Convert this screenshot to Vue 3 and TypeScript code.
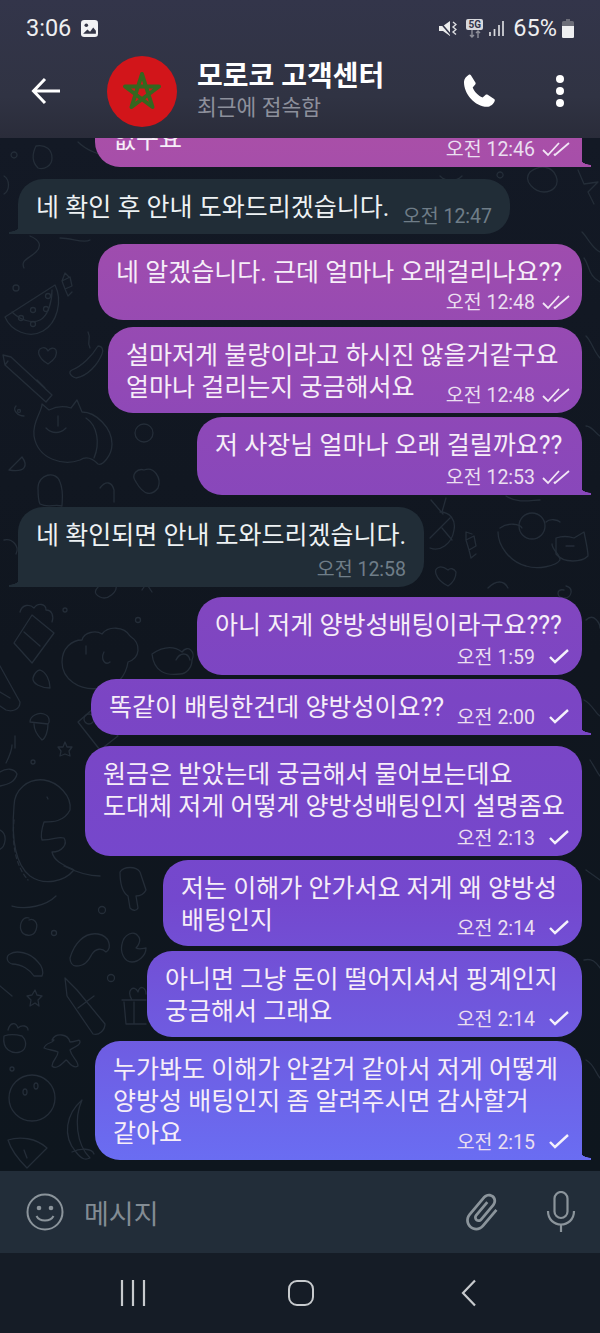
<script setup lang="ts">
interface Message {
  id: number
  out: boolean
  lines: string[]
  time: string
  read?: boolean
  tail?: boolean
  width: number
  height: number
  gap: number
}

const messages: Message[] = [
  { id: 1, out: true, lines: ['없구요'], time: '오전 12:46', read: true, tail: true, width: 487, height: 56, gap: 0 },
  { id: 2, out: false, lines: ['네 확인 후 안내 도와드리겠습니다.'], time: '오전 12:47', tail: true, width: 492, height: 55, gap: 12 },
  { id: 3, out: true, lines: ['네 알겠습니다. 근데 얼마나 오래걸리나요??'], time: '오전 12:48', read: true, width: 484, height: 76, gap: 10 },
  { id: 4, out: true, lines: ['설마저게 불량이라고 하시진 않을거같구요', '얼마나 걸리는지 궁금해서요'], time: '오전 12:48', read: true, width: 474, height: 86, gap: 7 },
  { id: 5, out: true, lines: ['저 사장님 얼마나 오래 걸릴까요??'], time: '오전 12:53', read: true, tail: true, width: 385, height: 78, gap: 4 },
  { id: 6, out: false, lines: ['네 확인되면 안내 도와드리겠습니다.'], time: '오전 12:58', tail: true, width: 406, height: 80, gap: 12 },
  { id: 7, out: true, lines: ['아니 저게 양방성배팅이라구요???'], time: '오전 1:59', width: 385, height: 78, gap: 10 },
  { id: 8, out: true, lines: ['똑같이 배팅한건데 양방성이요??'], time: '오전 2:00', tail: true, width: 491, height: 56, gap: 4 },
  { id: 9, out: true, lines: ['원금은 받았는데 궁금해서 물어보는데요', '도대체 저게 어떻게 양방성배팅인지 설명좀요'], time: '오전 2:13', width: 497, height: 110, gap: 11 },
  { id: 10, out: true, lines: ['저는 이해가 안가서요 저게 왜 양방성', '배팅인지'], time: '오전 2:14', width: 419, height: 86, gap: 4 },
  { id: 11, out: true, lines: ['아니면 그냥 돈이 떨어지셔서 핑계인지', '궁금해서 그래요'], time: '오전 2:14', width: 435, height: 86, gap: 5 },
  { id: 12, out: true, lines: ['누가봐도 이해가 안갈거 같아서 저게 어떻게', '양방성 배팅인지 좀 알려주시면 감사할거', '같아요'], time: '오전 2:15', tail: true, width: 487, height: 119, gap: 4 },
]
</script>

<template>
  <div class="phone">
    <header class="top">
      <div class="status">
        <span class="clock">3:06</span>
        <svg class="status-pic" width="17" height="17" viewBox="0 0 16 16">
          <rect width="16" height="16" rx="3" fill="#f2f2f4" />
          <circle cx="5" cy="5" r="1.7" fill="#343647" />
          <path d="M2 13l4-4 2.500 2 3-4 2.500 3v3z" fill="#343647" />
        </svg>
        <span class="status-space" />
        <svg width="18" height="17" viewBox="0 0 18 17">
          <path d="M0 6h4l7-5v15l-7-5H0z" fill="#eceded" />
          <path d="M0 1l12 14" stroke="#33354a" stroke-width="1.6" />
          <path d="M14 2l3 2.500-3 2.500 3 2.500-3 2.500 3 2.500" fill="none" stroke="#dcdde0" stroke-width="1.4" />
        </svg>
        <span class="net">
          <span class="net-5g">5G</span>
          <svg width="16" height="8" viewBox="0 0 16 8">
            <path d="M5 0v7M3 5l2 2 2-2M11 8V1M9 3l2-2 2 2" fill="none" stroke="#8e8f99" stroke-width="1.4" />
          </svg>
        </span>
        <svg width="15" height="17" viewBox="0 0 15 17">
          <path d="M1 12v4M5.500 9v7M10 5v11M14 1v15" stroke="#d9dade" stroke-width="1.700" />
        </svg>
        <span class="battery-text">65%</span>
        <svg class="battery" width="12" height="19" viewBox="0 0 12 19">
          <path d="M4 0h4v2h2.500a1.500 1.500 0 0 1 1.500 1.500v14a1.500 1.500 0 0 1-1.500 1.500h-9A1.500 1.500 0 0 1 0 17.500v-14A1.500 1.500 0 0 1 1.500 2H4z" fill="#6c6d78" />
          <path d="M0 7h12v10.500a1.500 1.500 0 0 1-1.500 1.500h-9A1.500 1.500 0 0 1 0 17.500z" fill="#efeff1" />
        </svg>
      </div>
      <div class="bar">
        <svg class="back" width="30" height="28" viewBox="0 0 30 28">
          <path d="M29 14H3M14 2L2.500 14 14 26" fill="none" stroke="#fff" stroke-width="3" />
        </svg>
        <div class="avatar">
          <svg width="40" height="40" viewBox="0 0 40 40">
            <path d="M20 3L30.500 36 3 15.500h34L9.500 36z" fill="none" stroke="#35671f" stroke-width="4" stroke-linejoin="round" />
          </svg>
        </div>
        <div class="title">
          <div class="name">모로코 고객센터</div>
          <div class="seen">최근에 접속함</div>
        </div>
        <svg class="call" width="36" height="38" viewBox="0 0 24 24">
          <path d="M6.600 1.500l3 4.800c.3.500.2 1-.1 1.400L7.800 9.600c1 2.700 3.500 5.300 6.600 6.700l1.900-1.700c.4-.4 1-.4 1.500-.1l4.300 2.900c.5.300.6.900.3 1.400-1 2.100-2.900 3.700-5 3.700C9.400 22.500 1.800 13.800 2 5.800c0-1.700 1.500-3.500 3.200-4.600.5-.3 1.100-.2 1.400.3z" fill="#fff" />
        </svg>
        <div class="dots"><i /><i /><i /></div>
      </div>
    </header>

    <main class="chat">
      <svg class="doodles" width="600" height="1033" viewBox="0 138 600 1033">
        <g fill="none" stroke="#242d38" stroke-width="1.300" stroke-linejoin="round" stroke-linecap="round">
          <!-- top strip -->
          <path d="M36 146c-4 8-4 16 2 22 6 2 14-2 14-10s-6-14-16-12zM78 142c8 8 22 14 34 14M14 152a3 3 0 1 0 .1 0" />
          <path d="M530 172c10-8 22-6 26 4s-4 16-12 16-22-10-14-20zM578 170l6 14 14-2-10 10 6 12M440 176c6 6 16 6 22 0M500 172a3 3 0 1 0 .1 0" />
          <path d="M4 176c6 4 6 14 0 18M582 232c6 6 10 16 18 20" />
          <!-- left column, upper -->
          <path d="M30 236c10 4 12 10 6 16s-16 8-12 16M60 238c12 0 24 6 30 2" />
          <!-- watermelon -->
          <path d="M5 317c6 14 24 22 38 14s20-30 12-46zM12 312c8 8 20 12 28 8s12-18 12-30" />
          <circle cx="21" cy="318" r="2.500" /><circle cx="33" cy="310" r="2.500" /><circle cx="33" cy="324" r="2.500" /><circle cx="46" cy="309" r="2.500" /><circle cx="48" cy="296" r="2.500" />
          <!-- candy -->
          <path d="M62 281l8-4 2 9-7 3zM62 281l3-8 4 4M65 289l3 7 4-4" />
          <circle cx="16" cy="288" r="3" />
          <!-- pencil -->
          <path d="M3 355l8 2 41 38-6 7-41-37zM37 380l8 8M8 361l-3 4" />
          <!-- heart -->
          <path d="M48 364c-10-6-12-14-6-16 3-1 5 1 6 3 2-3 6-4 8-1 2 5-2 10-8 14z" />
          <!-- pacifier -->
          <path d="M72 370c10-4 20-14 26-24 4 0 6 4 4 8-4 10-14 22-26 24-6-2-8-6-4-8zM90 348c-4-8 2-8-2-16" />
          <!-- cat -->
          <path d="M34 436c-2-14 8-24 8-32l7 6c8-4 16-4 22-2l6-8 5 12c14 0 30 16 30 32 0 12-10 22-14 20-6-6-12-8-18-4-16 6-42 0-46-24z" />
          <path d="M46 428c6 6 14 6 20 0M58 416v10M86 418c12 8 14 26 8 40" />
          <path d="M24 416c-6 0-12-6-8-10" />
          <circle cx="144" cy="433" r="9" /><circle cx="19" cy="411" r="1.500" />
          <path d="M9 470l13-13c6 8 4 16-13 13z" />
          <!-- ghost -->
          <path d="M38 488c0-14 18-18 22-6 4 10 2 18 2 24-8-2-14 2-22-2-2-4-2-10-2-16z" />
          <path d="M136 482c-6-8 2-14 8-12 10-4 18 8 14 18-6 8-14 8-22-6zM100 488c6-8 12-6 14 2v12" />
          <!-- left column, middle -->
          <path d="M24 526a5 5 0 1 0 .1 0M4 540c8-2 16 6 12 14M36 566c8-6 18-4 22 6" />
          <!-- popcorn -->
          <path d="M14 643l18-28 22 18-22 30zM20 612c2-8 10-8 14-4 4-6 12-4 12 2 6 0 8 6 6 12M24 632l16 14" />
          <circle cx="65" cy="610" r="2" /><circle cx="138" cy="620" r="2.500" />
          <!-- bear cloud -->
          <path d="M62 662c0-14 10-22 20-22 2-8 14-10 20-6 6-8 22-8 28 2 12 8 10 22-2 26-2 14-12 26-26 26-24 4-40-10-40-26z" />
          <path d="M86 646v8M104 652c-4 8 2 14 6 10" />
          <path d="M100 585c4-6 14-6 16 0s-8 16-16 12-4-8 0-12z" />
          <path d="M142 590l4-6M148 586l4 6" />
          <!-- bowl on right edge of column -->
          <path d="M152 654c12-8 22-8 30-2 6-8 14 0 10 8 0 8-6 14-12 14-14 2-26-2-28-20zM176 660c4-8 12-8 14 0" />
          <!-- cup -->
          <path d="M0 666l20 36c0 8-8 10-14 8l-6-4M0 692l10 6" />
          <!-- leaf -->
          <path d="M40 670c6 2 10 10 10 18-8 0-18-4-17-10 1-4 4-8 7-8z" />
          <!-- acorn -->
          <path d="M30 722c0-6 8-10 14-8 6 2 6 8 4 10zM34 724c0 8 6 14 8 16 4-2 6-10 6-16" />
          <!-- camera -->
          <path d="M78 722l16-14 24 28-18 14z" /><circle cx="89" cy="719" r="5" />
          <!-- star -->
          <path d="M65 742l2 5 5 0-3 4 1 5-5-2-5 2 1-5-3-4 5 0z" />
          <path d="M12 745c0 5-3 12-6 18M15 736v12" />
          <circle cx="33" cy="762" r="2" />
          <path d="M0 772c6-4 14-4 17 2-2 8-8 10-17 12" />
          <!-- dino -->
          <path d="M14 806c0-16 14-28 30-26 14 2 28 16 26 30-6 12-18 12-26 12-2 6-4 12-2 18 12 0 16-4 22-2 4 6-2 14-12 14 2 10 14 14 22 18-10 12-30 16-44 6-18-14-18-46-16-70zM47 797l1 2" />
          <path d="M14 820c-2 20 0 44 14 60" stroke-dasharray="4 3" />
          <!-- lower left -->
          <path d="M0 830c8 4 6 18-2 20" />
          <path d="M120 872c4-6 16-6 20 0l6 18c-2 4-6 6-10 6l2 12c-2 4-6 2-8 0l-2-12c-6-4-8-14-8-24z" />
          <path d="M64 866c12 6 24 10 36 10M12 906c14 4 34 0 44-10" />
          <path d="M29 918c-6-2-10 6-8 12s12 8 15 0-3-12-7-10" />
          <circle cx="54" cy="933" r="2.500" /><circle cx="102" cy="910" r="3.500" /><circle cx="111" cy="978" r="3.500" />
          <!-- shrimp -->
          <path d="M70 958c4-14 14-26 28-24 12 2 14 14 8 18-4-4-10-4-14 2-4 8-8 12-16 12-4 0-6-4-6-8z" />
          <!-- duck -->
          <path d="M122 944c2-10 12-14 16-8 4 4 0 10-2 12 4 2 8 0 10 0 0 8-8 14-14 14-8 0-12-10-10-18z" />
          <!-- sock -->
          <path d="M10 954c6-4 20-2 28 8 4 4 6 10 4 14l-8 0c-4-6-12-12-22-12-6-2-6-8-2-10z" />
          <path d="M0 986l12 10" />
          <!-- star -->
          <path d="M35 990l2 5 5 1-4 4 1 6-4-3-5 3 1-6-4-4 5-1z" />
          <!-- marker -->
          <path d="M65 978l12 12 28 34c0 6-6 12-12 10l-26-38zM78 1008l16-12" />
          <!-- gift -->
          <path d="M122 1000h24M124 1002l2 22h20M134 1002v22M132 1000c-6-10 2-16 6-8 2-8 8-4 8 2" />
          <!-- pot -->
          <path d="M4 1036c6-2 10-2 18 0 6 6 4 14-2 16-8 2-18-2-16-16zM8 1030c2-8 8-8 10-2 4-4 10-2 10 2" />
          <!-- gingerbread -->
          <path d="M52 1040c4-8 16-6 18 2 6 0 10-4 10 0s-8 6-10 8c2 8 8 10 8 16-6 4-10-6-12-6-4 4-10 10-14 6 0-6 6-8 6-14-4-2-10-2-14-4 2-6 8-4 10-8z" />
          <circle cx="12" cy="1069" r="2" />
          <!-- bowling ball -->
          <circle cx="32" cy="1098" r="23" /><ellipse cx="25" cy="1092" rx="2" ry="3" /><ellipse cx="36" cy="1086" rx="2" ry="3" />
          <!-- moon -->
          <path d="M82 1100c-16 14-20 36-6 52 6 8 10 8 14 6-14-14-16-40-8-58z" />
          <path d="M72 1152c8-4 20-4 22 2" />
          <!-- pizza -->
          <path d="M8 1140c12-4 28-2 39 8l-20 20c-8-8-16-18-19-28zM24 1150l3 8" />
          <!-- right column -->
          <path d="M584 258c6 8 4 18 16 24M586 336c6 6 8 16 14 22M586 426c6 0 10 8 14 10" />
          <path d="M586 620c8-8 14 4 14 8M584 700c8 4 12 14 16 16M590 760c4 6 8 14 10 16M586 870l14 10M584 960c8-2 12 2 16 8M586 1060c8 4 10 14 14 18" />
          <!-- pineapple -->
          <path d="M430 548c10 4 22-4 24-18 2-10-4-18-14-18M431 500l12 14M446 498l-4 14M450 518l-20 20M442 528l10 12" />
          <!-- candy -->
          <path d="M466 540l8-4 2 10-7 4zM466 540l0-8 6 2M469 550l2 8 5-4" />
          <!-- snowman -->
          <circle cx="532" cy="526" r="13" />
          <path d="M500 528c8-6 20-4 22 0M546 522c4-4 12-2 14 0M498 532c0 14 12 30 28 34 12 4 30 0 34-6 0-6-8-10-8-16M506 496c12 8 26 4 34 4" />
          <!-- fox -->
          <path d="M556 538c6-2 12-2 18 0l10-6c2 10 4 18 4 24-6 6-24 8-32-2zM566 546h8" />
          <path d="M448 570c-8-6-14-2-12 4 2 6 8 10 12 12 6-4 8-10 8-14-2-4-6-4-8-2z" />
          <path d="M564 590c-8-2-8 8 0 8s10-10 2-12M488 588c8-8 16-8 20 0" />
        </g>
      </svg>
      <div
        v-for="m in messages"
        :key="m.id"
        class="bubble"
        :class="{ 'bubble--out': m.out, 'bubble--in': !m.out, 'bubble--tail': m.tail }"
        :style="{ width: m.width + 'px', height: m.height + 'px', marginTop: m.gap + 'px' }"
      >
        <div class="text">
          <div v-for="line in m.lines" :key="line">{{ line }}</div>
        </div>
        <div class="meta">
          <span>{{ m.time }}</span>
          <svg v-if="m.out" class="tick" width="30" height="18" viewBox="0 0 30 18">
            <path v-if="m.read" d="M1 9l5 5L17 2M12 13l1 1L27 2" fill="none" stroke="#f2e6f5" stroke-width="1.800" />
            <path v-else d="M8 8l5 5L26 1" fill="none" stroke="#f4f1fb" stroke-width="2.400" />
          </svg>
        </div>
      </div>
    </main>

    <footer class="input">
      <svg class="smile" width="38" height="38" viewBox="0 0 38 38">
        <circle cx="19" cy="19" r="17.500" fill="none" stroke="#8b949b" stroke-width="2" />
        <circle cx="13" cy="15" r="2.300" fill="#8b949b" /><circle cx="25" cy="15" r="2.300" fill="#8b949b" />
        <path d="M10.500 23c3 6 14 6 17 0" fill="none" stroke="#8b949b" stroke-width="2" />
      </svg>
      <span class="placeholder">메시지</span>
      <svg class="clip" width="44" height="44" viewBox="0 0 24 24">
        <path transform="rotate(40 12 12)" d="M16.500 6v11.500c0 2.210-1.790 4-4 4s-4-1.790-4-4V5c0-1.380 1.120-2.500 2.500-2.500s2.500 1.120 2.500 2.500v10.500c0 .55-.45 1-1 1s-1-.45-1-1V6H10v9.500c0 1.380 1.120 2.500 2.500 2.500s2.500-1.120 2.500-2.500V5c0-2.210-1.790-4-4-4S7 2.790 7 5v12.500c0 3.040 2.460 5.500 5.500 5.500s5.500-2.460 5.500-5.500V6h-1.500z" fill="#8b949b" />
      </svg>
      <svg class="mic" width="30" height="42" viewBox="0 0 30 42">
        <rect x="8.500" y="1" width="13" height="26" rx="6.500" fill="none" stroke="#8b949b" stroke-width="2.200" />
        <path d="M2 20c0 18 26 18 26 0M15 33v8" fill="none" stroke="#8b949b" stroke-width="2.200" />
      </svg>
    </footer>

    <nav class="nav">
      <svg width="26" height="26" viewBox="0 0 26 26">
        <path d="M2 0v26M13 0v26M24 0v26" stroke="#c7cacd" stroke-width="2.200" />
      </svg>
      <span class="home" />
      <svg class="nav-back" width="16" height="28" viewBox="0 0 16 28">
        <path d="M14 1.500L2 14l12 12.500" fill="none" stroke="#c7cacd" stroke-width="2.200" />
      </svg>
    </nav>
  </div>
</template>

<style scoped>
.phone {
  width: 600px;
  height: 1333px;
  display: flex;
  flex-direction: column;
  overflow: hidden;
  background: #151c26;
  font-family: Roboto, "Noto Sans CJK KR", sans-serif;
  color: #fff;
}

.top {
  height: 138px;
  flex: none;
  background: linear-gradient(#33354a, #303343 70%, #2a2c3a);
  position: relative;
  z-index: 2;
}

.status {
  height: 54px;
  padding: 2px 26px 0;
  display: flex;
  align-items: center;
  gap: 6px;
  box-sizing: border-box;
}

.clock {
  font-size: 23.500px;
  color: #eeeef0;
  margin-right: 4px;
}

.status-space {
  flex: 1;
}

.net {
  width: 17px;
  margin-left: 3px;
  display: flex;
  flex-direction: column;
  align-items: center;
}

.net-5g {
  width: 17px;
  text-align: center;
  font-size: 10px;
  line-height: 11px;
  font-weight: 700;
  border-radius: 2px;
  background: #d8d9dd;
  color: #33354a;
}

.battery-text {
  font-size: 23.500px;
  color: #eeeef0;
  margin-left: 3px;
}

.battery {
  margin-left: -1px;
}

.bar {
  height: 74px;
  padding-left: 31px;
  display: flex;
  align-items: center;
}

.back {
  flex: none;
}

.avatar {
  width: 70px;
  height: 71px;
  margin-left: 46px;
  flex: none;
  border-radius: 50%;
  background: #d2151a;
  display: flex;
  align-items: center;
  justify-content: center;
}

.title {
  margin-left: 20px;
  flex: 1;
}

.name {
  font-size: 28px;
  line-height: 34px;
  font-weight: 700;
}

.seen {
  font-size: 21.500px;
  line-height: 28px;
  color: #8d909c;
}

.call {
  flex: none;
  margin-right: 59px;
}

.dots {
  width: 8px;
  margin-right: 36px;
  display: flex;
  flex-direction: column;
  gap: 4px;
}

.dots i {
  width: 8px;
  height: 8px;
  border-radius: 50%;
  background: #fff;
}

.chat {
  flex: 1;
  position: relative;
  overflow: hidden;
  display: flex;
  flex-direction: column;
  justify-content: flex-end;
  padding-bottom: 11px;
  background: linear-gradient(#131925, #10161f 50%, #0e161e);
}

.doodles {
  position: absolute;
  left: 0;
  top: 0;
}

.bubble {
  position: relative;
  flex: none;
  box-sizing: border-box;
  padding: 13px 0 0 18px;
  border-radius: 25px;
  font-size: 25px;
  line-height: 32px;
}

.bubble--out {
  align-self: flex-end;
  margin-right: 18px;
  background: linear-gradient(#a94fa8 138px, #8d48b8 430px, #7b45c4 700px, #7448ce 900px, #6a6df2 1160px) fixed;
  color: #f6eef8;
}

.bubble--in {
  align-self: flex-start;
  margin-left: 18px;
  background: #212d37;
  color: #eef2f4;
}

.bubble--tail.bubble--out {
  border-bottom-right-radius: 0;
}

.bubble--tail.bubble--in {
  border-bottom-left-radius: 0;
}

.bubble--tail::after {
  content: "";
  position: absolute;
  bottom: 0;
  width: 10px;
  height: 18px;
  background: inherit;
}

.bubble--tail.bubble--out::after {
  right: -9px;
  mask: radial-gradient(circle 16px at 100% 0, transparent 15.500px, #000 16px);
}

.bubble--tail.bubble--in::after {
  left: -9px;
  mask: radial-gradient(circle 16px at 0 0, transparent 15.500px, #000 16px);
}

.meta {
  position: absolute;
  right: 10px;
  bottom: 5px;
  display: flex;
  align-items: center;
  gap: 7px;
  font-size: 19.500px;
  line-height: 24px;
  color: #eadff0;
}

.bubble--in .meta {
  right: 18px;
  color: #6f7d88;
}

.input {
  height: 82px;
  flex: none;
  box-sizing: border-box;
  padding: 0 24px 0 26px;
  display: flex;
  align-items: center;
  background: #222d39;
}

.placeholder {
  flex: 1;
  margin-left: 20px;
  font-size: 27px;
  color: #838c94;
}

.clip {
  margin-right: 42px;
}

.nav {
  height: 80px;
  flex: none;
  display: flex;
  align-items: center;
  padding-left: 120px;
  box-sizing: border-box;
  background: #151c26;
}

.home {
  width: 26px;
  height: 26px;
  margin-left: 142px;
  box-sizing: border-box;
  border: 2.500px solid #c7cacd;
  border-radius: 9px;
}

.nav-back {
  margin-left: 147px;
}
</style>
